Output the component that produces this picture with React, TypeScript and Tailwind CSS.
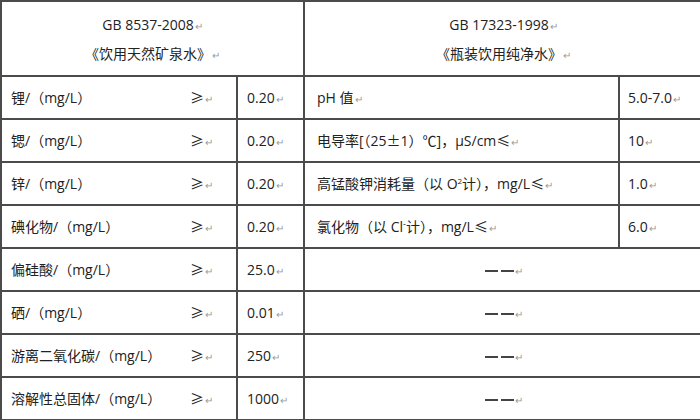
import React from 'react';

const Mark = () => <span className="text-[10px] text-[#9a9a9a] ml-[1px]">↵</span>;

const Sym = ({ children }: { children: React.ReactNode }) => (
  <span style={{ fontFamily: '"Noto Sans CJK SC", sans-serif' }}>{children}</span>
);

const mineral = [
  { name: '锂/（mg/L）', value: '0.20' },
  { name: '锶/（mg/L）', value: '0.20' },
  { name: '锌/（mg/L）', value: '0.20' },
  { name: '碘化物/（mg/L）', value: '0.20' },
  { name: '偏硅酸/（mg/L）', value: '25.0' },
  { name: '硒/（mg/L）', value: '0.01' },
  { name: '游离二氧化碳/（mg/L）', value: '250' },
  { name: '溶解性总固体/（mg/L）', value: '1000' },
];

const pure: { name: React.ReactNode; value: string }[] = [
  { name: 'pH 值', value: '5.0-7.0' },
  {
    name: (
      <>
        电导率[（25<Sym>±</Sym>1）<Sym>℃</Sym>]，μS/cm<Sym>≤</Sym>
      </>
    ),
    value: '10',
  },
  {
    name: (
      <>
        高锰酸钾消耗量（以 O<sup className="text-[8px] -top-[5px]">2</sup>计），mg/L<Sym>≤</Sym>
      </>
    ),
    value: '1.0',
  },
  {
    name: (
      <>
        氯化物（以 Cl<sup className="text-[9px] -top-[5px]">-</sup>计），mg/L<Sym>≤</Sym>
      </>
    ),
    value: '6.0',
  },
];

const cell = 'border-2 border-[#4b4b4b] h-[43px] align-middle';

export default function App() {
  return (
    <div
      className="w-[700px] h-[420px] bg-white overflow-hidden text-[14px] text-[#222]"
      style={{ fontFamily: '"Open Sans", "Noto Sans CJK SC", sans-serif' }}
    >
      <table className="border-collapse table-fixed w-[702px] border-t-2 border-l-2 border-b-2 border-[#3a3a3a]">
        <colgroup>
          <col className="w-[236px]" />
          <col className="w-[67px]" />
          <col className="w-[315px]" />
          <col className="w-[84px]" />
        </colgroup>
        <tbody>
          <tr>
            <td colSpan={2} className="border-2 border-[#4b4b4b] h-[75px] text-center leading-[27px] pt-[2px]">
              <div>
                GB 8537-2008
                <Mark />
              </div>
              <div>
                《饮用天然矿泉水》
                <Mark />
              </div>
            </td>
            <td colSpan={2} className="border-2 border-[#4b4b4b] h-[75px] text-center leading-[27px] pt-[2px]">
              <div>
                GB 17323-1998
                <Mark />
              </div>
              <div>
                《瓶装饮用纯净水》
                <Mark />
              </div>
            </td>
          </tr>
          {mineral.map((m, i) => (
            <tr key={i}>
              <td className={cell + ' pl-[9px] pr-[10px]'}>
                <div className="flex items-center">
                  <span className="min-w-[176px]">{m.name}</span>
                  <span className="ml-[3px]">
                    <Sym>≥</Sym>
                    <Mark />
                  </span>
                </div>
              </td>
              <td className={cell + ' pl-[9px]'}>
                {m.value}
                <Mark />
              </td>
              {i < 4 ? (
                <>
                  <td className={cell + ' pl-[12px]'}>
                    {pure[i].name}
                    <Mark />
                  </td>
                  <td className={cell + ' pl-[8px]'}>
                    {pure[i].value}
                    <Mark />
                  </td>
                </>
              ) : (
                <td colSpan={2} className={cell + ' text-center'}>
                  <span className="inline-flex items-center gap-[3px] align-middle">
                    <span className="inline-block w-[13px] h-[2px] bg-[#444]" />
                    <span className="inline-block w-[13px] h-[2px] bg-[#444]" />
                  </span>
                  <Mark />
                </td>
              )}
            </tr>
          ))}
        </tbody>
      </table>
    </div>
  );
}
